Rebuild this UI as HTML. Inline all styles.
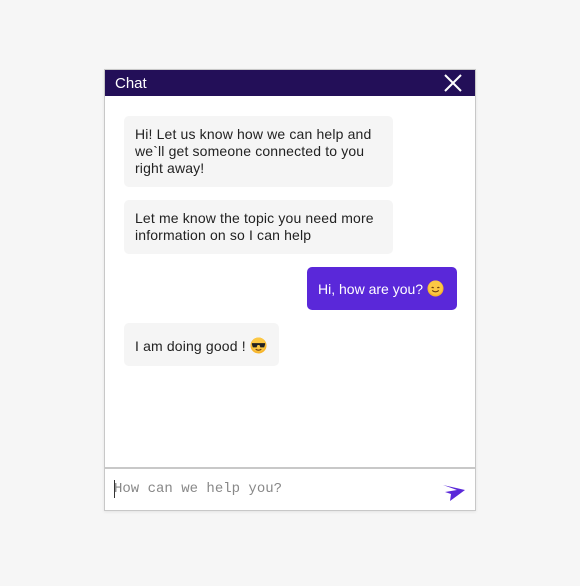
<!DOCTYPE html>
<html><head><meta charset="utf-8"><style>
*{box-sizing:border-box;margin:0;padding:0}
body{width:580px;height:586px;background:#f6f6f6;position:relative;font-family:"Liberation Sans",sans-serif;overflow:hidden}
.box{position:absolute;left:104px;top:69px;width:372px;height:442px;background:#fff;border:1px solid #c8c8c8;box-shadow:0 1px 3px rgba(0,0,0,.08)}
.hdr{position:absolute;left:0;top:0;width:370px;height:26px;background:#230f58;color:#fff;font-size:15px;line-height:28px;padding-left:10px}
.b{position:absolute;font-size:14px;line-height:17px;color:#222;background:#f5f5f5;border-radius:5px;padding:10px 11px;letter-spacing:0.15px}
.nw{white-space:nowrap}
.me{background:#5a28d9;color:#fff;letter-spacing:0}
.em{display:inline-block;vertical-align:-3px;width:17px;height:17px}
.inp{position:absolute;left:0;top:397px;width:370px;height:44px;border-top:2px solid #c8c8c8}
.ph{position:absolute;left:9px;top:12px;font-family:"Liberation Mono",monospace;font-size:14px;color:#888}
.cur{position:absolute;left:9px;top:11px;width:1px;height:18px;background:#333}
</style></head><body>
<div class="box">
<div class="hdr">Chat
<svg style="position:absolute;left:339px;top:4px" width="18" height="18" viewBox="0 0 18 18"><path d="M1 1L17 17M17 1L1 17" stroke="#fff" stroke-width="2"/></svg></div>
<div class="b" style="left:19px;top:46px;width:269px;height:71px">Hi! Let us know how we can help and we`ll get someone connected to you right away!</div>
<div class="b" style="left:19px;top:130px;width:269px;height:54px">Let me know the topic you need more information on so I can help</div>
<div class="b me nw" style="left:202px;top:197px;width:150px;height:43px;padding-top:13px">Hi, how are you? <svg class="em" viewBox="0 0 18 18"><circle cx="9" cy="9" r="8.5" fill="#f7b52c"/><circle cx="9" cy="8" r="7.5" fill="#fcc843"/><path d="M5 8.5q1-1.5 2 0M11 8.5q1-1.5 2 0" stroke="#6b3c10" stroke-width="1.2" fill="none"/><path d="M5.5 11q3.5 3 7 0" stroke="#6b3c10" stroke-width="1.2" fill="none"/></svg></div>
<div class="b nw" style="left:19px;top:253px;width:155px;height:43px;padding-top:14px">I am doing good ! <svg class="em" viewBox="0 0 18 18"><circle cx="9" cy="9" r="8.5" fill="#f7b52c"/><circle cx="9" cy="8" r="7.5" fill="#fcc843"/><path d="M2 6.5h14v1.5l-1 3h-4l-1-2.5h-2l-1 2.5h-4l-1-3z" fill="#222"/><path d="M6 13q3 2 6 0" stroke="#6b3c10" stroke-width="1.2" fill="none"/></svg></div>
<div class="inp"><div class="cur"></div><div class="ph">How can we help you?</div>
<svg style="position:absolute;left:338px;top:15px" width="23" height="18" viewBox="0 0 23 18"><path d="M0 1L22 6L7 17L8 10L2 8L14 6z" fill="#5a28d9"/></svg></div>
</div>
</body></html>
